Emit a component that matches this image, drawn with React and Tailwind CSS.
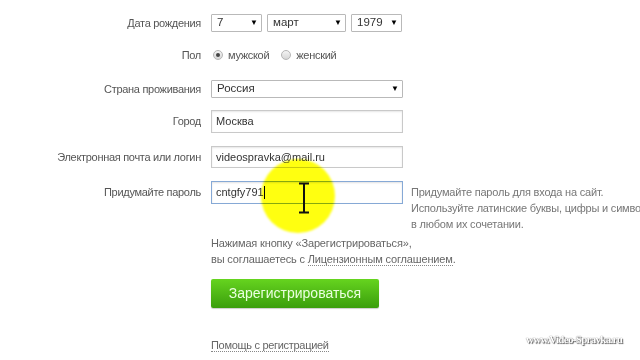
import React from "react";

const font = { fontFamily: '"Liberation Sans", Arial, sans-serif' };

function Arrow() {
  return <span className="text-[8px] leading-none text-black">▼</span>;
}

function Select({ value, width }) {
  return (
    <div
      className={`${width} h-[18px] flex items-center justify-between pl-[5px] pr-[3px] border border-[#b9b9b9] rounded-[1px] bg-white text-[11.5px] text-[#333]`}
    >
      <span>{value}</span>
      <Arrow />
    </div>
  );
}

function Radio({ checked }) {
  return (
    <span className="w-[10px] h-[10px] rounded-full border border-[#b5b5b5] bg-gradient-to-b from-[#f4f4f4] to-[#d6d6d6] flex items-center justify-center">
      {checked && <span className="w-[4px] h-[4px] rounded-full bg-[#444]" />}
    </span>
  );
}

function Label({ children }) {
  return (
    <div className="w-[202px] shrink-0 text-right pr-[1px] text-[11px] tracking-[-0.3px] text-[#555]">
      {children}
    </div>
  );
}

function Input({ value, active, children }) {
  return (
    <div
      className={`w-[192px] h-full flex items-center pl-[4px] bg-white text-[11px] text-[#333] border ${
        active
          ? "border-[#86a9d6] shadow-[inset_0_1px_2px_rgba(0,0,0,0.12)]"
          : "border-[#c9c9c9] shadow-[inset_0_1px_2px_rgba(0,0,0,0.1)]"
      }`}
    >
      {value}
      {children}
    </div>
  );
}

export default function App() {
  return (
    <div className="relative w-[640px] h-[360px] overflow-hidden bg-white" style={font}>
      <div className="flex flex-col">
        {/* Дата рождения */}
        <div className="mt-[14px] h-[18px] flex items-center gap-[9px]">
          <Label>Дата рождения</Label>
          <div className="flex gap-[5px]">
            <Select value="7" width="w-[51px]" />
            <Select value="март" width="w-[79px]" />
            <Select value="1979" width="w-[51px]" />
          </div>
        </div>

        {/* Пол */}
        <div className="mt-[14px] h-[18px] flex items-center gap-[9px]">
          <Label>Пол</Label>
          <div className="flex items-center text-[11px] tracking-[-0.3px] text-[#555]">
            <span className="ml-[2px]"><Radio checked /></span>
            <span className="ml-[5px]">мужской</span>
            <span className="ml-[12px]"><Radio /></span>
            <span className="ml-[5px]">женский</span>
          </div>
        </div>

        {/* Страна */}
        <div className="mt-[16px] h-[18px] flex items-center gap-[9px]">
          <Label>Страна проживания</Label>
          <Select value="Россия" width="w-[192px]" />
        </div>

        {/* Город */}
        <div className="mt-[12px] h-[23px] flex items-center gap-[9px]">
          <Label>Город</Label>
          <Input value="Москва" />
        </div>

        {/* Email */}
        <div className="mt-[13px] h-[22px] flex items-center gap-[9px]">
          <Label>Электронная почта или логин</Label>
          <Input value="videospravka@mail.ru" />
        </div>

        {/* Пароль */}
        <div className="mt-[13px] flex items-start gap-[9px]">
          <div className="h-[23px] flex items-center">
            <Label>Придумайте пароль</Label>
          </div>
          <div className="h-[23px]">
            <Input value="cntgfy791" active>
              <span className="w-[1px] h-[13px] bg-black" />
            </Input>
          </div>
          <div className="mt-[3px] ml-[-1px] text-[11px] tracking-[-0.2px] leading-[16px] text-[#777] whitespace-nowrap">
            <div>Придумайте пароль для входа на сайт.</div>
            <div>Используйте латинские буквы, цифры и символы</div>
            <div>в любом их сочетании.</div>
          </div>
        </div>

        {/* Соглашение */}
        <div className="mt-[3px] ml-[211px] text-[11px] tracking-[-0.15px] leading-[16px] text-[#666]">
          <div>Нажимая кнопку «Зарегистрироваться»,</div>
          <div>
            вы соглашаетесь с{" "}
            <span className="border-b border-dotted border-[#888]">Лицензионным соглашением</span>.
          </div>
        </div>

        {/* Кнопка */}
        <div className="mt-[12px] ml-[211px]">
          <button className="w-[168px] h-[29px] rounded-[2px] bg-gradient-to-b from-[#66d41f] to-[#3a9e0c] text-[#eaffdf] text-[14px] shadow-[0_1px_1px_rgba(0,0,0,0.2)]">
            Зарегистрироваться
          </button>
        </div>

        {/* Помощь */}
        <div className="mt-[29px] ml-[211px] text-[11px] tracking-[-0.3px] leading-[16px] text-[#666]">
          <span className="border-b border-dotted border-[#888]">Помощь с регистрацией</span>
        </div>
      </div>

      {/* Подсветка курсора */}
      <div className="absolute left-[261px] top-[159px] w-[74px] h-[74px] rounded-full bg-[#ffff10] mix-blend-multiply blur-[1px]" />
      <svg className="absolute left-[298px] top-[182px]" width="12" height="32" viewBox="0 0 12 32">
        <path d="M1 1.5h10M6 1.5v29M1 30.5h10" stroke="#111" strokeWidth="2" fill="none" />
      </svg>

      {/* Водяной знак */}
      <div
        className="absolute left-[526px] top-[331px] text-[11px] font-bold text-white tracking-[-0.7px] [text-shadow:0_0_1px_#444,1px_1px_1px_#666]"
        style={{ fontFamily: '"Liberation Serif", "Times New Roman", serif' }}
      >
        www.Video-Spravka.ru
      </div>
    </div>
  );
}
